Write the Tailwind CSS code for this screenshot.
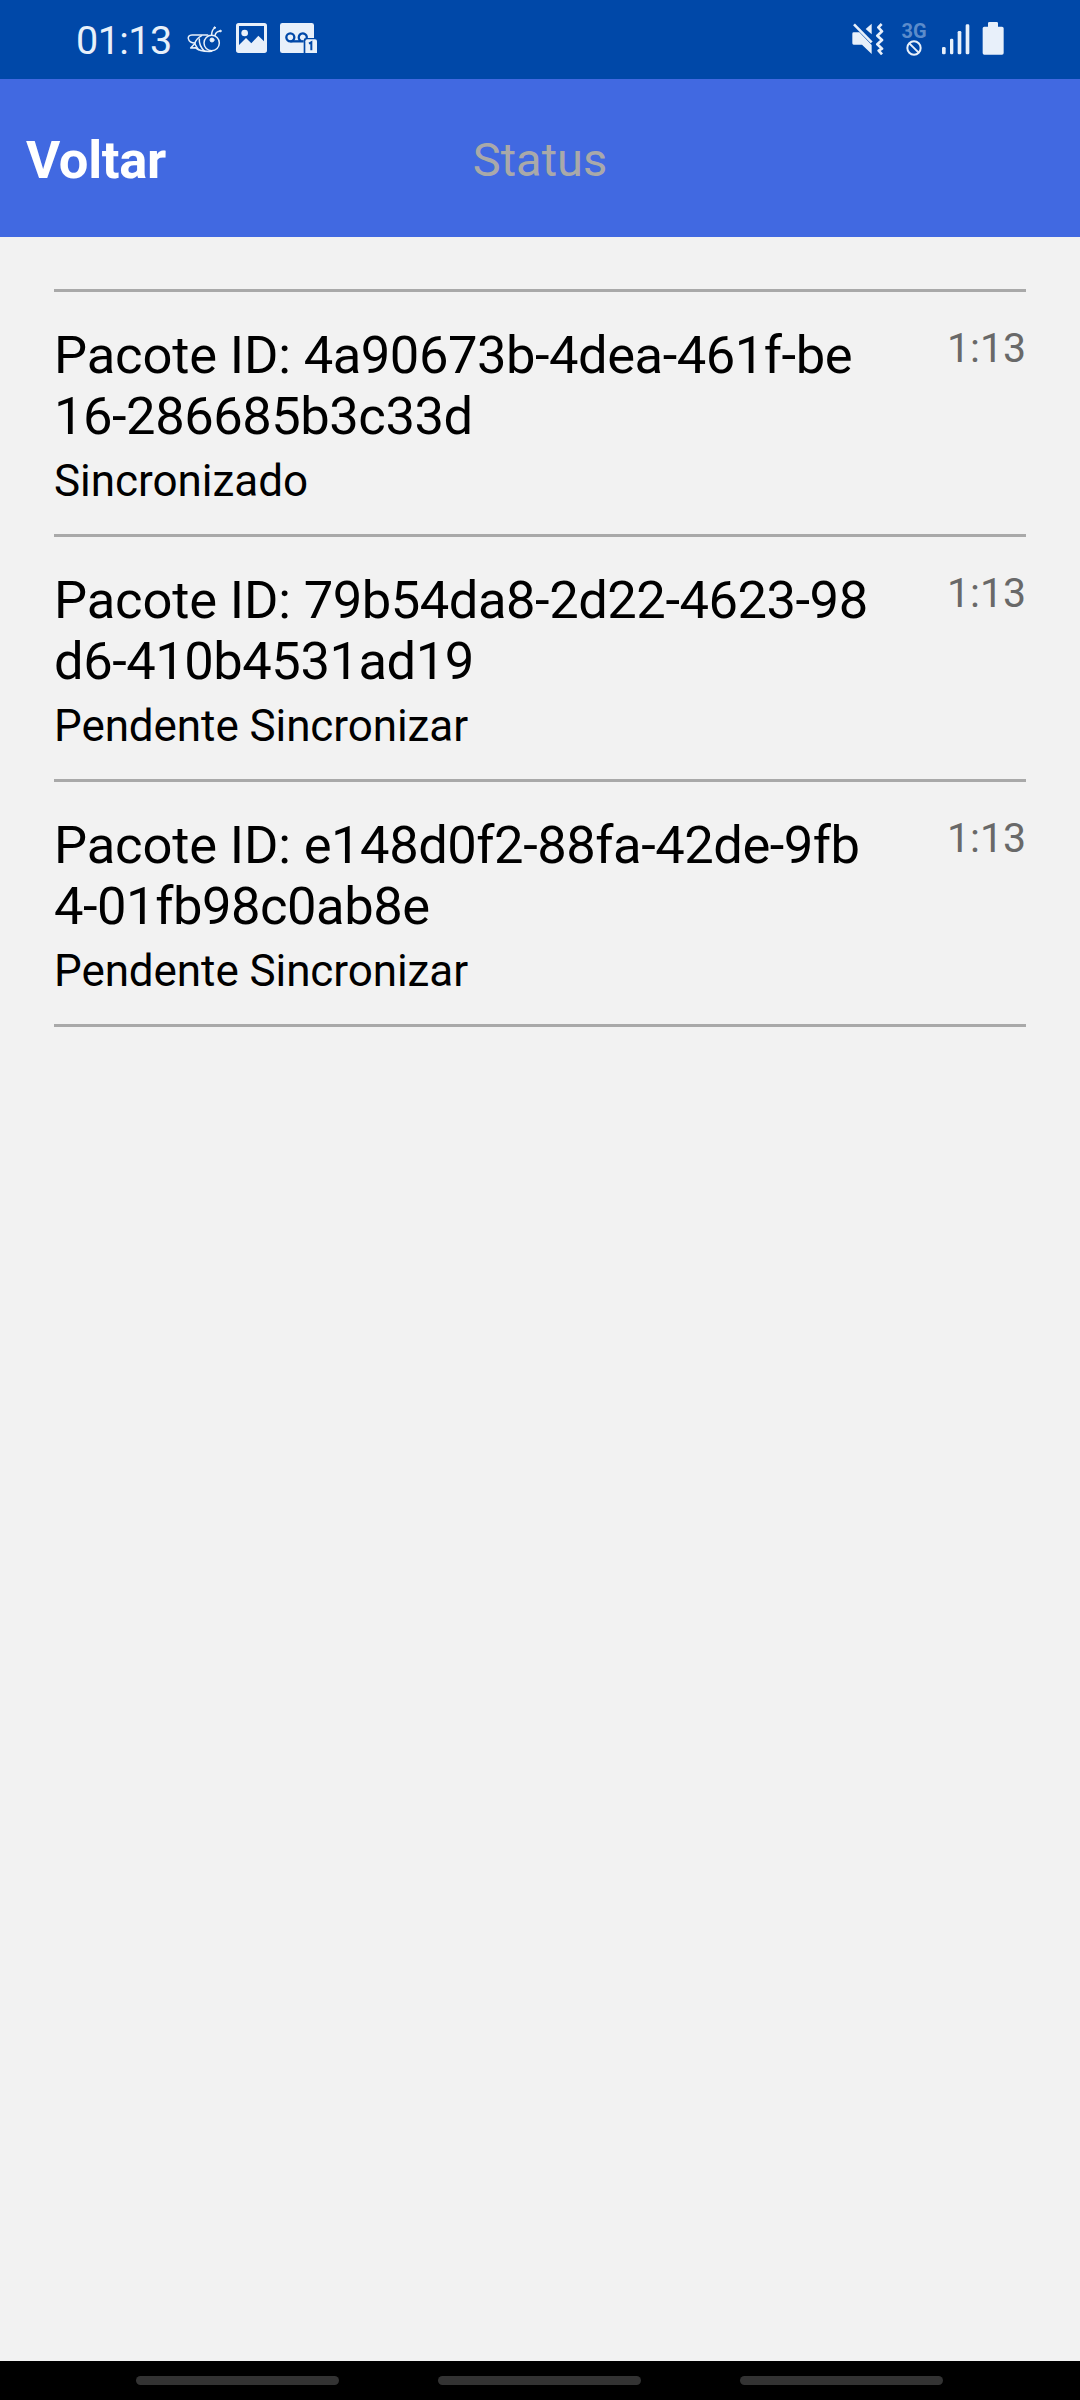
<!DOCTYPE html>
<html lang="pt">
<head>
<meta charset="utf-8">
<title>Status</title>
<script src="https://cdn.jsdelivr.net/npm/@tailwindcss/browser@4"></script>
</head>
<body class="flex h-[2400px] w-[1080px] flex-col overflow-hidden bg-[#f2f2f2] font-['Roboto',sans-serif] text-black">
  <div class="flex h-[79px] shrink-0 items-start bg-[#0048a8] pl-[76px] text-[#e8f0fa]">
    <span class="w-[111px] pt-[18px] text-[39.5px] leading-[46px] tracking-[-0.55px]">01:13</span>
    <!-- bee -->
    <svg class="mt-[25px] h-[28px] w-[36px] shrink-0" viewBox="0 0 108 84" fill="none" stroke="currentColor" stroke-width="4.5" stroke-linecap="round" stroke-linejoin="round">
      <path d="M62 30H15C5 30 3 36 4 41C6 50 13 54 24 54"/>
      <path d="M44 32C33 38 26 46 23 56L11 69L25 68C35 77 50 80 74 79"/>
      <path d="M23 56L34 74M37 42C36 54 42 68 52 78"/>
      <circle cx="74" cy="54" r="23"/>
      <path d="M74 29C74 20 76 14 83 9M84 31C86 24 91 19 99 19"/>
      <circle cx="83" cy="8" r="2.5" fill="currentColor" stroke-width="3"/>
      <circle cx="100" cy="18" r="2.5" fill="currentColor" stroke-width="3"/>
      <circle cx="75" cy="45" r="6" fill="currentColor" stroke-width="3"/>
    </svg>
    <!-- picture -->
    <svg class="mt-[23px] ml-[13px] h-[30px] w-[31px] shrink-0" viewBox="0 0 93 90" fill="currentColor">
      <path fill-rule="evenodd" d="M8 0H85Q93 0 93 8V82Q93 90 85 90H8Q0 90 0 82V8Q0 0 8 0ZM9 9V66L30 45L46 61L67 38L84 55V9Z"/>
      <circle cx="26" cy="30" r="10"/>
    </svg>
    <!-- voicemail with badge -->
    <svg class="mt-[23px] ml-[13px] h-[30px] w-[38px] shrink-0" viewBox="0 0 114 90">
      <path fill="currentColor" d="M7 0H95Q102 0 102 7V45H78Q71 45 71 52V90H7Q0 90 0 83V7Q0 0 7 0Z"/>
      <g fill="none" stroke="#0048a8" stroke-width="7"><circle cx="31" cy="43" r="12"/><path d="M31 55H71"/><path d="M63 54A12 12 0 1 1 80 46"/></g>
      <path fill="currentColor" d="M82 49H105Q111 49 111 55V90H76V55Q76 49 82 49Z"/>
      <path d="M87 62L94 58V82" fill="none" stroke="#0048a8" stroke-width="6"/>
    </svg>
    <!-- muted, vibrating -->
    <svg class="mt-[23px] ml-auto h-[32px] w-[33px] shrink-0" viewBox="0 0 99 96" fill="currentColor">
      <path d="M5 28H22L59 66V93L30 65H5Q1 65 1 61V32Q1 28 5 28Z"/>
      <path d="M59 2V34L41 18Z"/>
      <path d="M6 4L59 58" fill="none" stroke="currentColor" stroke-width="8"/>
      <path d="M89 3L79 13L90 25L76 38L90 51L76 64L90 77L80 83L90 94" fill="none" stroke="currentColor" stroke-width="8" stroke-linejoin="round"/>
    </svg>
    <div class="ml-[16px] flex w-[26px] shrink-0 flex-col items-center pt-[20px]">
      <span class="text-[20px] leading-[22px] font-bold text-[#5c8ccb]">3G</span>
      <svg class="-mt-[2px] h-[16px] w-[16px]" viewBox="0 0 48 48" fill="none" stroke="currentColor" stroke-width="6"><circle cx="24" cy="24" r="20"/><path d="M10 10L38 38"/></svg>
    </div>
    <!-- signal -->
    <svg class="mt-[24px] ml-[14px] h-[31px] w-[29px] shrink-0" viewBox="0 0 87 93" fill="currentColor">
      <rect x="3" y="69" width="11" height="22" rx="4"/><rect x="27" y="44" width="10" height="47" rx="4"/><rect x="50" y="21" width="11" height="70" rx="4"/><rect x="74" y="1" width="11" height="90" rx="4"/>
    </svg>
    <!-- battery -->
    <svg class="mt-[22px] mr-[76px] ml-[12px] h-[33px] w-[22px] shrink-0" viewBox="0 0 66 99" fill="currentColor">
      <path d="M18 4Q18 0 22 0H44Q48 0 48 4V14H60Q65 14 65 19V93Q65 98 60 98H7Q2 98 2 93V19Q2 14 7 14H18Z"/>
    </svg>
  </div>

  <header class="grid h-[158px] shrink-0 grid-cols-3 items-center bg-[#4169e1] pt-[3px]">
    <span class="pl-[26px] text-[52.5px] leading-[62px] font-bold tracking-[-0.3px] text-white">Voltar</span>
    <span class="text-center text-[47px] leading-[56px] text-[#a9a9a9]">Status</span>
  </header>

  <main class="mx-[54px] mt-[52px] flex-1">
    <ul class="border-t-3 border-[#a9a9a9]">
      <li class="flex h-[245px] items-start justify-between border-b-3 border-[#a9a9a9] pt-[33px]">
        <div>
          <p class="text-[52.5px] leading-[61px] tracking-[-0.15px] whitespace-nowrap">Pacote ID: <span class="tracking-[-0.47px]">4a90673b-4dea-461f-be<br>16-286685b3c33d</span></p>
          <p class="mt-[8px] text-[44px] leading-[52px] tracking-[-0.03px]">Sincronizado</p>
        </div>
        <span class="text-[41px] leading-[47px] text-[#696969]">1:13</span>
      </li>
      <li class="flex h-[245px] items-start justify-between border-b-3 border-[#a9a9a9] pt-[33px]">
        <div>
          <p class="text-[52.5px] leading-[61px] tracking-[-0.15px] whitespace-nowrap">Pacote ID: <span class="tracking-[-0.47px]">79b54da8-2d22-4623-98<br>d6-410b4531ad19</span></p>
          <p class="mt-[8px] text-[44px] leading-[52px] tracking-[-0.08px]">Pendente Sincronizar</p>
        </div>
        <span class="text-[41px] leading-[47px] text-[#696969]">1:13</span>
      </li>
      <li class="flex h-[245px] items-start justify-between border-b-3 border-[#a9a9a9] pt-[33px]">
        <div>
          <p class="text-[52.5px] leading-[61px] tracking-[-0.15px] whitespace-nowrap">Pacote ID: <span class="tracking-[-0.47px]">e148d0f2-88fa-42de-9fb<br>4-01fb98c0ab8e</span></p>
          <p class="mt-[8px] text-[44px] leading-[52px] tracking-[-0.08px]">Pendente Sincronizar</p>
        </div>
        <span class="text-[41px] leading-[47px] text-[#696969]">1:13</span>
      </li>
    </ul>
  </main>

  <nav class="flex h-[39px] shrink-0 items-center justify-center gap-[99px] bg-black pr-[1px]">
    <span class="h-[9px] w-[203px] rounded-full bg-[#333]"></span>
    <span class="h-[9px] w-[203px] rounded-full bg-[#333]"></span>
    <span class="h-[9px] w-[203px] rounded-full bg-[#333]"></span>
  </nav>
</body>
</html>
